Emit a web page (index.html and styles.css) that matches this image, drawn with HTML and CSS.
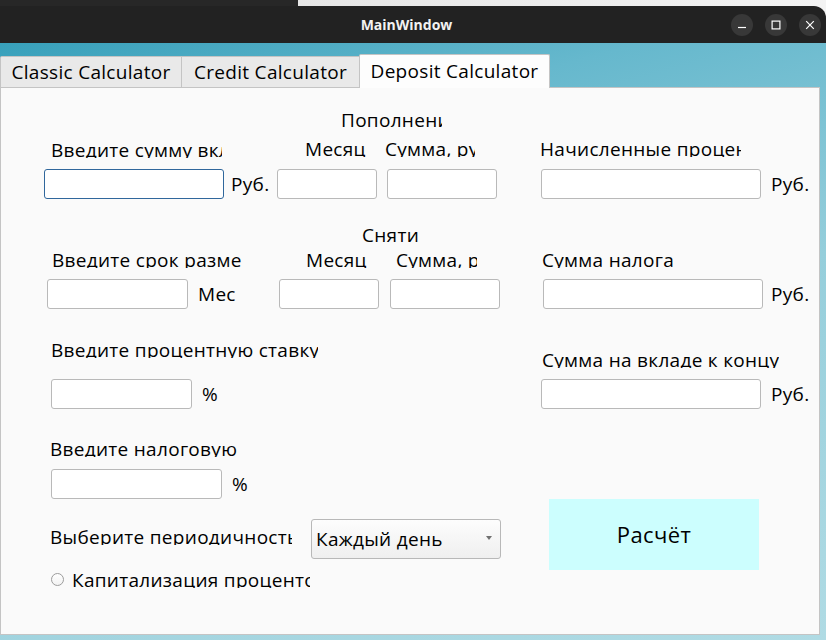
FILE: index.html
```html
<!DOCTYPE html>
<html lang="ru">
<head>
<meta charset="utf-8">
<title>MainWindow</title>
<link rel="stylesheet" href="styles.css">
</head>
<body>
<div class="top">
  <div class="strip"></div>
  <div class="titlebar">
    <div class="tb-side"></div>
    <div class="title">MainWindow</div>
    <div class="tb-side tb-buttons">
      <span class="wbtn"><svg width="10" height="10" viewBox="0 0 10 10"><path d="M1 7.5h8" stroke="#fff" stroke-width="1.2"/></svg></span>
      <span class="wbtn"><svg width="10" height="10" viewBox="0 0 10 10"><rect x="1.1" y="1.1" width="7.8" height="7.8" fill="none" stroke="#fff" stroke-width="1.2"/></svg></span>
      <span class="wbtn"><svg width="10" height="10" viewBox="0 0 10 10"><path d="M1.2 1.2l7.6 7.6M8.8 1.2l-7.6 7.6" stroke="#fff" stroke-width="1.2"/></svg></span>
    </div>
  </div>
</div>

<div class="tabs">
  <div class="tab tab-classic">Classic Calculator</div>
  <div class="tab tab-credit">Credit Calculator</div>
  <div class="tab tab-active">Deposit Calculator</div>
</div>

<div class="pane">
  <div class="lm">
    <div class="lm-top">
      <div class="col-lt">
        <div class="lbl l1">Введите сумму вклада</div>
        <div class="row r1"><input class="field focus f1" type="text"><span class="unit u1">Руб.</span></div>
        <div class="lbl l2">Введите срок размещения</div>
        <div class="row r2"><input class="field f2" type="text"><span class="unit u2">Мес</span></div>
      </div>
      <div class="col-mid">
        <div class="lbl m-head1">Пополнения</div>
        <div class="lbl-row mr1"><span class="lbl m-month1">Месяц</span><span class="lbl m-sum1">Сумма, руб.</span></div>
        <div class="row mi1"><input class="field w100 a" type="text"><input class="field w110 b" type="text"></div>
        <div class="lbl m-head2">Снятия</div>
        <div class="lbl-row mr2"><span class="lbl m-month2">Месяц</span><span class="lbl m-sum2">Сумма, руб.</span></div>
        <div class="row mi2"><input class="field w100 c" type="text"><input class="field w110 d" type="text"></div>
      </div>
    </div>
    <div class="lm-bottom">
      <div class="lbl l3">Введите процентную ставку</div>
      <div class="row r3"><input class="field f3" type="text"><span class="unit u3">%</span></div>
      <div class="lbl l4">Введите налоговую ставку</div>
      <div class="row r4"><input class="field f4" type="text"><span class="unit u4">%</span></div>
      <div class="row-top r5">
        <span class="lbl l5">Выберите периодичность выплат</span>
        <div class="combo"><span>Каждый день</span><span class="arrow"></span></div>
      </div>
      <div class="row-top r6">
        <span class="radio"></span>
        <span class="lbl l6">Капитализация процентов</span>
      </div>
    </div>
  </div>
  <div class="col-right">
    <div class="lbl rl1">Начисленные проценты</div>
    <div class="row rr1"><input class="field w220 g1" type="text"><span class="unit ru1">Руб.</span></div>
    <div class="lbl rl2">Сумма налога</div>
    <div class="row rr2"><input class="field w220 g2" type="text"><span class="unit ru2">Руб.</span></div>
    <div class="lbl rl3">Сумма на вкладе к концу срока</div>
    <div class="row rr3"><input class="field w220 g3" type="text"><span class="unit ru3">Руб.</span></div>
    <div class="calc">Расчёт</div>
  </div>
</div>
</body>
</html>
```

FILE: styles.css
```css
* { box-sizing: border-box; }
html, body { margin: 0; padding: 0; }
body {
  width: 826px;
  height: 640px;
  overflow: hidden;
  font-family: "Open Sans", "Noto Sans", sans-serif;
  color: #000;
  background: linear-gradient(165deg, #2c9ab6 0%, #66b8cd 25%, #95cedb 55%, #b0dbe4 100%);
}

/* top: other window strip + title bar */
.top {
  background: linear-gradient(to right, #272727 0, #272727 298px, #e6e6e6 298px, #f3f3f3 100%);
}
.strip { height: 6px; }
.titlebar {
  height: 37px;
  background: #222;
  border-radius: 0 12px 0 0;
  display: flex;
  align-items: center;
}
.tb-side { flex: 1; }
.title {
  color: #f2f2f2;
  font-weight: 700;
  font-size: 14px;
  margin-left: -8px;
}
.tb-buttons {
  display: flex;
  justify-content: flex-end;
  gap: 12px;
  padding-right: 5px;
}
.wbtn {
  width: 22px;
  height: 22px;
  border-radius: 50%;
  background: #383838;
  display: flex;
  align-items: center;
  justify-content: center;
}

/* tabs */
.tabs {
  height: 44px;
  display: flex;
  align-items: flex-end;
}
.tab {
  position: relative;
  height: 31px;
  border: 1px solid #c4c4c4;
  border-bottom: none;
  background: #e9e9e9;
  font-size: 19px;
  letter-spacing: 0.3px;
  line-height: 30px;
  text-align: center;
  margin-right: -1px;
  white-space: nowrap;
}
.tab-classic { width: 182px; border-top-left-radius: 2px; }
.tab-credit { width: 179px; }
.tab-active {
  width: 191px;
  height: 34px;
  margin-bottom: -1px;
  background: #fdfdfd;
  line-height: 33px;
  z-index: 1;
  border-radius: 2px 2px 0 0;
}

/* pane */
.pane {
  width: 820px;
  height: 548px;
  background: #fafafa;
  border: 1px solid #c4c4c4;
  display: flex;
}
.lm { width: 519px; }
.lm-top { display: flex; height: 221px; }
.col-lt { width: 273px; display: flex; flex-direction: column; align-items: flex-start; }
.col-mid { width: 246px; display: flex; flex-direction: column; align-items: flex-start; }
.lm-bottom { display: flex; flex-direction: column; align-items: flex-start; }
.col-right { flex: 1; display: flex; flex-direction: column; align-items: flex-start; }

.lbl {
  display: block;
  height: 18px;
  line-height: 20px;
  font-size: 19px;
  letter-spacing: 0.3px;
  overflow: hidden;
  white-space: nowrap;
  flex: none;
}
.lbl-row { display: flex; height: 18px; }
.row { display: flex; align-items: center; height: 30px; flex: none; }
.row-top { display: flex; align-items: flex-start; flex: none; }
.unit { font-size: 19px; letter-spacing: 0.3px; line-height: 20px; white-space: nowrap; }

.field {
  height: 30px;
  border: 1px solid #b9b9b9;
  border-radius: 3px;
  background: #fff;
  padding: 0 4px;
  font: inherit;
  font-size: 18px;
  outline: none;
  margin: 0;
}
.field.focus { border-color: #30679c; }
.w100 { width: 100px; }
.w110 { width: 110px; }
.w220 { width: 220px; }

/* left top */
.l1 { margin: 52px 0 0 50px; width: 171px; }
.r1 { margin-top: 11px; }
.f1 { margin-left: 43px; width: 180px; }
.u1 { margin-left: 7px; }
.l2 { margin: 51px 0 0 51px; width: 190px; }
.r2 { margin-top: 11px; }
.f2 { margin-left: 46px; width: 141px; }
.u2 { margin-left: 10px; }

/* middle */
.m-head1 { margin: 22px 0 0 67px; width: 101px; }
.mr1 { margin-top: 11px; }
.m-month1 { margin-left: 31px; width: 80px; }
.m-sum1 { width: 90px; }
.mi1 { margin-top: 12px; }
.mi1 .a { margin-left: 3px; }
.mi1 .b { margin-left: 10px; }
.m-head2 { margin: 26px 0 0 88px; width: 57px; }
.mr2 { margin-top: 7px; }
.m-month2 { margin-left: 32px; width: 90px; }
.m-sum2 { width: 81px; }
.mi2 { margin-top: 11px; }
.mi2 .c { margin-left: 5px; }
.mi2 .d { margin-left: 11px; }

/* left bottom */
.l3 { margin: 31px 0 0 50px; width: 267px; }
.r3 { margin-top: 21px; }
.f3 { margin-left: 50px; width: 141px; }
.u3 { margin-left: 10px; }
.l4 { margin: 30px 0 0 49px; width: 188px; }
.r4 { margin-top: 12px; }
.f4 { margin-left: 50px; width: 171px; }
.u4 { margin-left: 10px; }
.r5 { margin-top: 20px; height: 40px; }
.l5 { margin: 8px 0 0 49px; width: 242px; }
.combo {
  margin-left: 19px;
  width: 190px;
  height: 40px;
  border: 1px solid #b8b8b8;
  border-radius: 3px;
  background: linear-gradient(#fdfdfd, #efefef);
  display: flex;
  align-items: center;
  justify-content: space-between;
  padding: 0 8px 0 4px;
  font-size: 19px;
  letter-spacing: 0.3px;
}
.arrow {
  width: 0;
  height: 0;
  border-left: 3.5px solid transparent;
  border-right: 3.5px solid transparent;
  border-top: 4px solid #707070;
  margin-top: -2px;
}
.r6 { margin-top: 11px; }
.radio {
  margin: 3px 0 0 50px;
  width: 13px;
  height: 13px;
  border-radius: 50%;
  border: 1px solid #9c9c9c;
  background: linear-gradient(#fff, #f2f2f2);
  flex: none;
}
.l6 { margin-left: 8px; width: 238px; }

/* right */
.rl1 { margin: 51px 0 0 20px; width: 201px; }
.rr1 { margin-top: 12px; }
.g1 { margin-left: 21px; }
.ru1 { margin-left: 10px; }
.rl2 { margin: 51px 0 0 22px; width: 220px; }
.rr2 { margin-top: 11px; }
.g2 { margin-left: 23px; }
.ru2 { margin-left: 8px; }
.rl3 { margin: 41px 0 0 22px; width: 237px; }
.rr3 { margin-top: 11px; }
.g3 { margin-left: 21px; }
.ru3 { margin-left: 10px; }
.calc {
  margin: 90px 0 0 29px;
  width: 210px;
  height: 71px;
  background: #ccfefe;
  display: flex;
  align-items: center;
  justify-content: center;
  font-size: 22px;
  letter-spacing: 0.4px;
  padding-bottom: 2px;
}
```
